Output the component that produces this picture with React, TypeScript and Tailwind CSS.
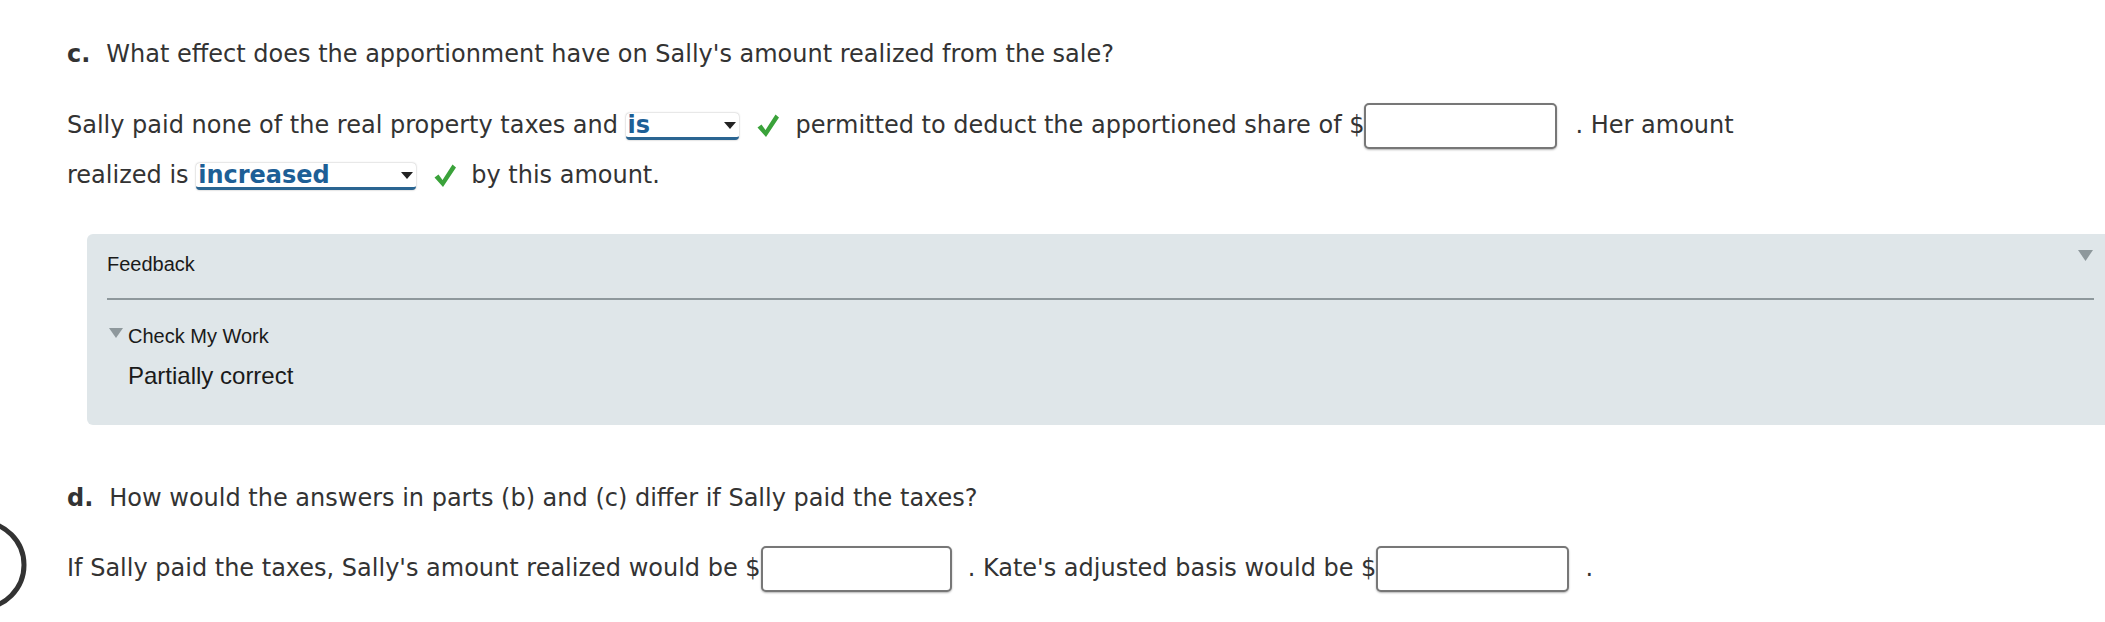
import React from 'react'

const body = "font-['Verdana','DejaVu_Sans',sans-serif] text-[24px] text-[#333333]"
const arial = "font-['Liberation_Sans','Arial',sans-serif] text-[#1a1a1a]"

function Check() {
  return (
    <svg width="24" height="26" viewBox="0 0 24 26" className="inline-block align-middle">
      <path d="M1.5 14.5 L5.5 11.5 L9.5 17 L19.5 1.5 L23 4.5 L10 24 Z" fill="#3aa23a" />
    </svg>
  )
}

function Choice({ value, width }: { value: string; width: string }) {
  return (
    <span
      className={`relative inline-block align-middle h-[27px] ${width} bg-white rounded-[4px] border-b-[3px] border-[#2a6592] shadow-[0_0_2px_rgba(0,0,0,0.35)] leading-[24px] text-left font-bold text-[#1d5f96] pl-[2px]`}
    >
      {value}
      <svg width="12" height="8" viewBox="0 0 12 8" className="absolute right-[3px] top-[9px]">
        <path d="M0 0 L12 0 L6 7 Z" fill="#222" />
      </svg>
    </span>
  )
}

function Blank({ width }: { width: string }) {
  return (
    <span
      className={`inline-block align-middle h-[46px] ${width} bg-white rounded-[5px] border-2 border-[#777777] shadow-[0_1px_2px_rgba(0,0,0,0.3)]`}
    />
  )
}

export default function App() {
  return (
    <div className={`relative w-[2105px] h-[622px] bg-white overflow-hidden ${body}`}>
      <div className="pl-[67px]">
        {/* Part c */}
        <div className="pt-[39px] leading-[30px]">
          <span className="font-bold">c.</span>
          <span className="ml-[16px]">What effect does the apportionment have on Sally's amount realized from the sale?</span>
        </div>

        <div className="mt-[31px] leading-[50px]">
          <div className="h-[50px] whitespace-nowrap">
            Sally paid none of the real property taxes and{' '}
            <Choice value="is" width="w-[113px]" />
            <span className="inline-block w-[17px]" />
            <Check />
            <span className="inline-block w-[16px]" />
            permitted to deduct the apportioned share of ${''}
            <Blank width="w-[193px]" />
            <span className="ml-[18px]">. Her amount</span>
          </div>
          <div className="h-[50px] whitespace-nowrap">
            realized is{' '}
            <Choice value="increased" width="w-[220px]" />
            <span className="inline-block w-[17px]" />
            <Check />
            <span className="inline-block w-[14px]" />
            by this amount.
          </div>
        </div>
      </div>

      {/* Feedback panel */}
      <div className={`ml-[87px] mt-[34px] h-[191px] bg-[#dfe6e9] rounded-l-[6px] pl-[20px] pr-[11px] ${arial}`}>
        <div className="flex items-center justify-between pt-[15px] h-[64px] pb-[19px]">
          <span className="text-[20px] leading-[24px]">Feedback</span>
          <svg width="15" height="11" viewBox="0 0 15 11" className="mr-[1px] -mt-[18px]">
            <path d="M0 0 L15 0 L7.5 11 Z" fill="#8e989c" />
          </svg>
        </div>
        <div className="h-[2px] bg-[#8e989c]" />
        <div className="flex items-center mt-[24px] h-[24px]">
          <svg width="14" height="10" viewBox="0 0 14 10" className="ml-[2px] mr-[5px] -mt-[6px]">
            <path d="M0 0 L14 0 L7 10 Z" fill="#8e989c" />
          </svg>
          <span className="text-[20px] leading-[24px]">Check My Work</span>
        </div>
        <div className="pl-[21px] mt-[14px] text-[24px] leading-[28px]">Partially correct</div>
      </div>

      {/* Part d */}
      <div className="pl-[67px]">
        <div className="mt-[58px] leading-[30px]">
          <span className="font-bold">d.</span>
          <span className="ml-[16px]">How would the answers in parts (b) and (c) differ if Sally paid the taxes?</span>
        </div>
        <div className="mt-[30px] h-[50px] leading-[50px] whitespace-nowrap">
          If Sally paid the taxes, Sally's amount realized would be $
          <Blank width="w-[191px]" />
          <span className="ml-[16px]">. Kate's adjusted basis would be $</span>
          <Blank width="w-[193px]" />
          <span className="ml-[16px]">.</span>
        </div>
      </div>

      {/* partial circle at left edge */}
      <svg width="30" height="96" viewBox="0 0 30 96" className="absolute left-0 top-[518px]">
        <circle cx="-19" cy="47" r="43" fill="none" stroke="#333333" strokeWidth="5" />
      </svg>
    </div>
  )
}
